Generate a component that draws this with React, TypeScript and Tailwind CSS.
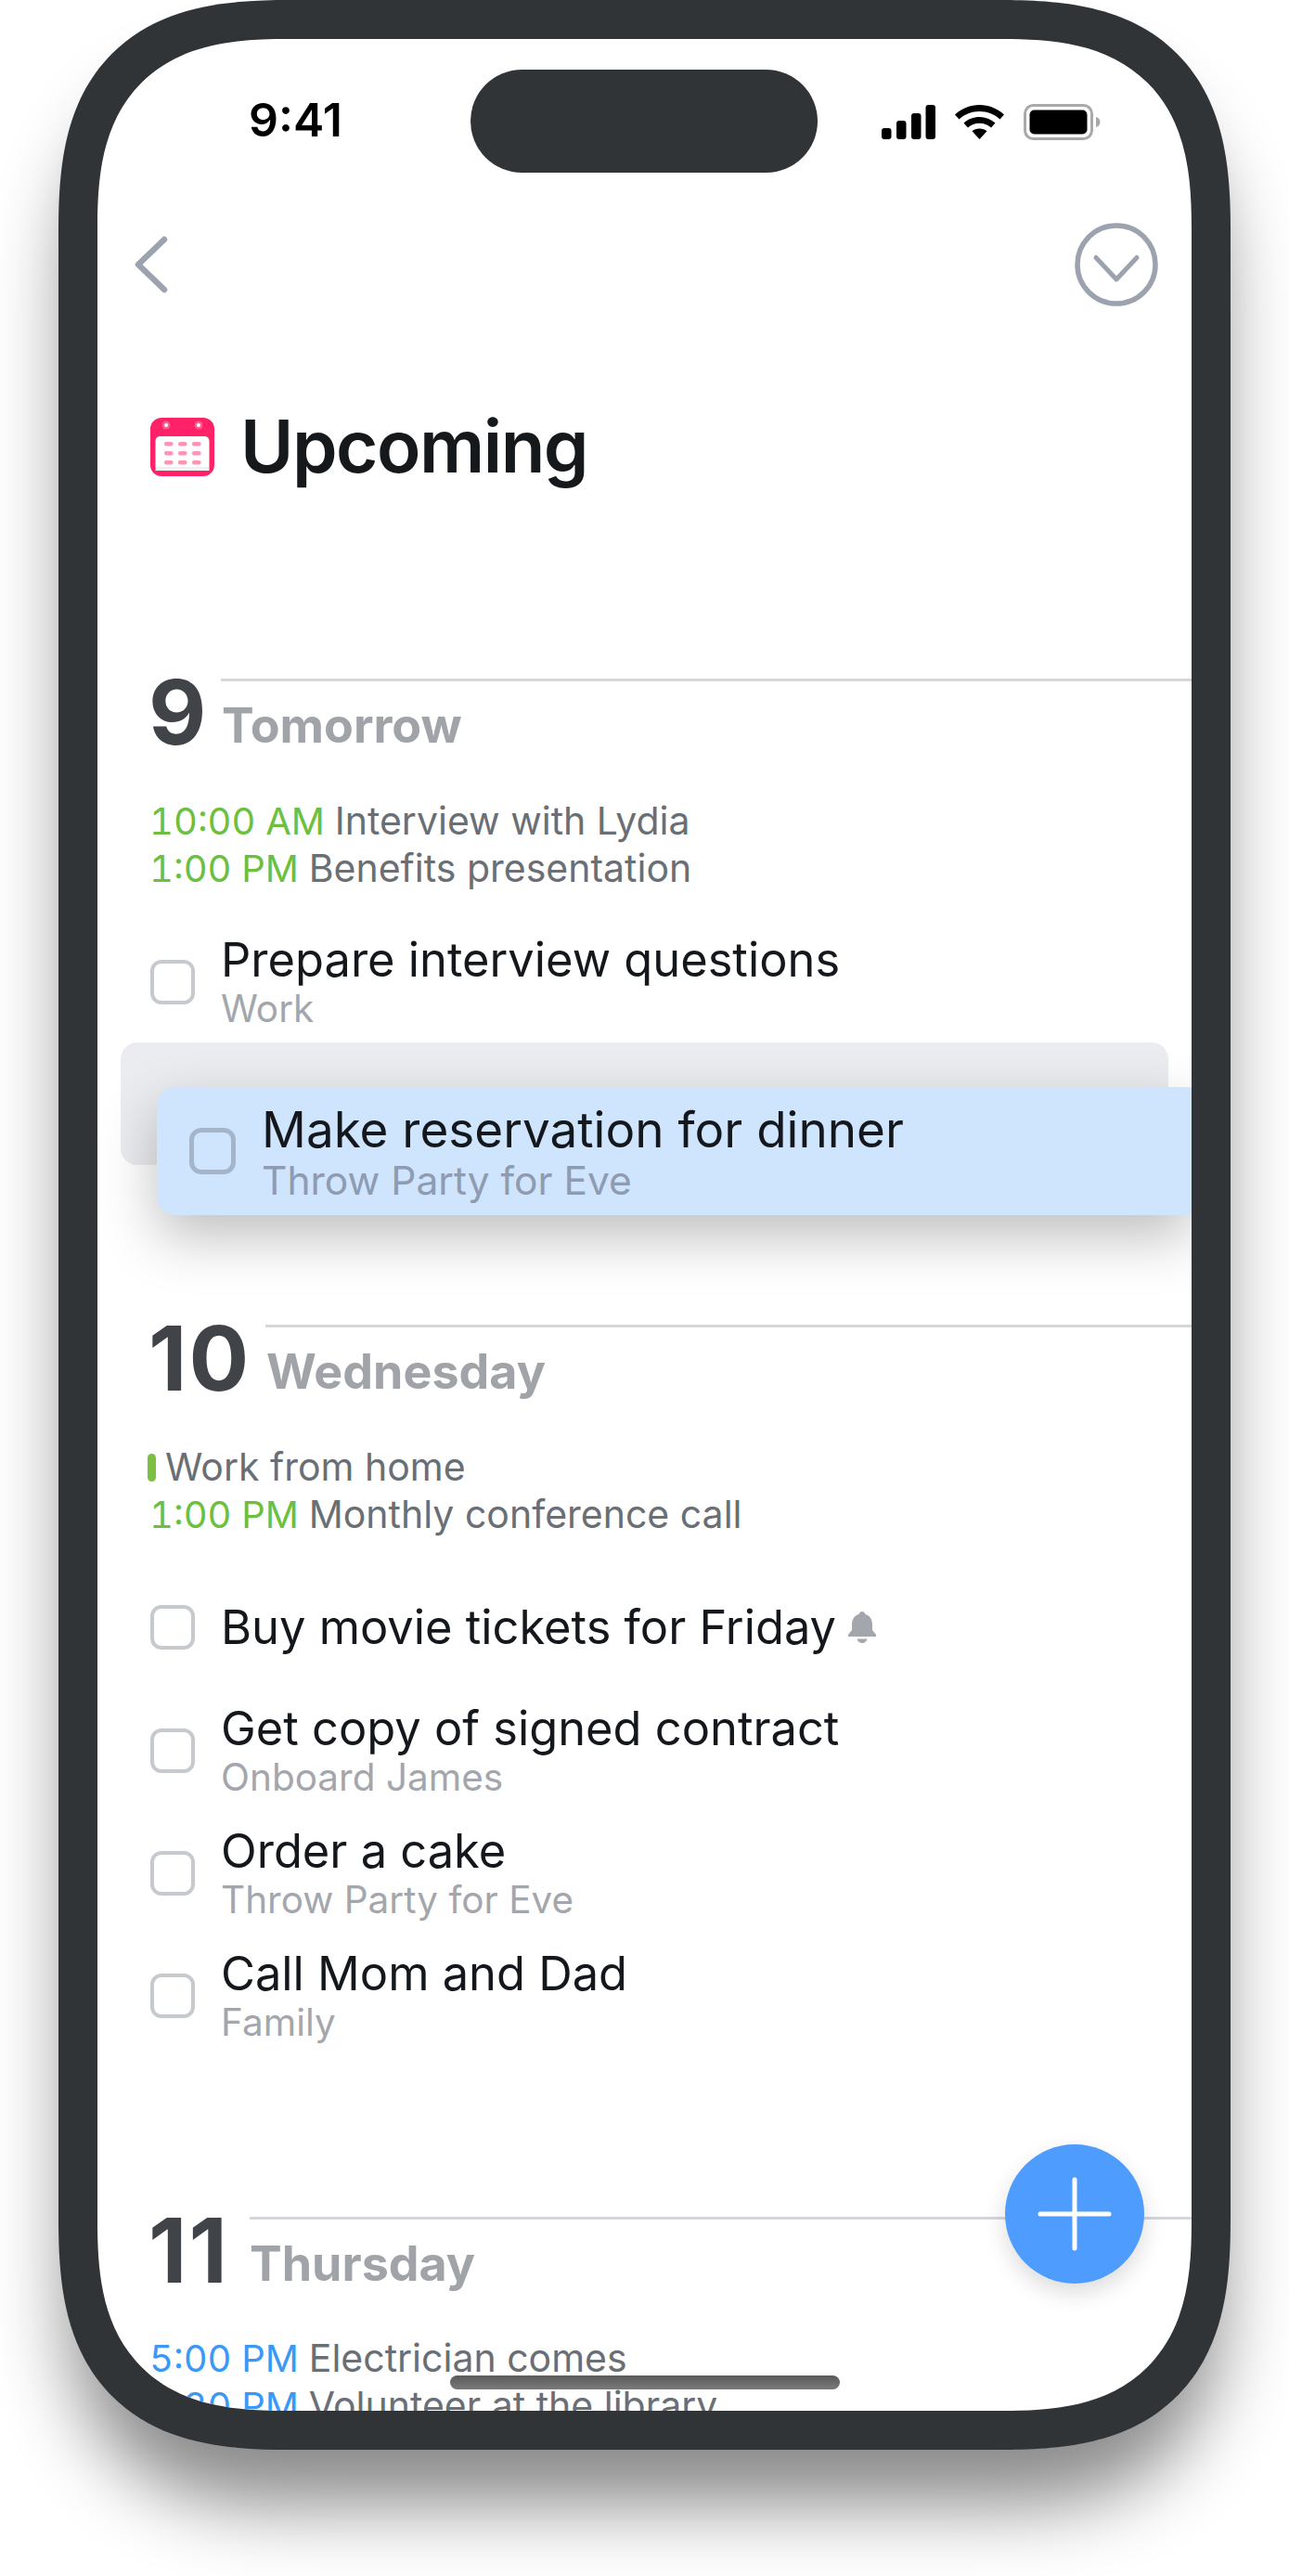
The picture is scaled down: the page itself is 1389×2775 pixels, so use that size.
const sans = "font-['Inter',sans-serif]";

function Check({ blue }: { blue?: boolean }) {
  return (
    <span
      className={
        blue
          ? "block h-[50px] w-[50px] shrink-0 rounded-[13px] border-[5px] border-[#a4b5ca]"
          : "block h-[48px] w-[48px] shrink-0 rounded-[12px] border-[4.5px] border-[#c6c9cd]"
      }
    />
  );
}

function Task({ title, sub }: { title: string; sub: string }) {
  return (
    <div className="flex h-[132px] items-center">
      <Check />
      <div className="ml-[28px]">
        <p className="h-[58px] text-[50.6px] leading-[58px] text-[#14181c]">{title}</p>
        <p className="h-[48px] text-[40.5px] leading-[48px] text-[#a3a7ad]">{sub}</p>
      </div>
    </div>
  );
}

function DayHeader({ day, name, dayWidth, lineLeft }: { day: string; name: string; dayWidth: string; lineLeft: string }) {
  return (
    <div className="relative flex h-[70px] items-baseline">
      <span className={`shrink-0 text-[96px] leading-[70px] font-bold tracking-[2px] text-[#404449] ${dayWidth}`}>
        <span className="-ml-[2px] inline-block">{day}</span>
      </span>
      <span className="-translate-y-[2px] text-[52px] leading-[64px] font-bold text-[#a0a3a8]">{name}</span>
      <span className={`absolute -top-[1px] right-0 h-[3px] bg-[#d4d6da] ${lineLeft}`} />
    </div>
  );
}

function Event({ time, text, blue }: { time?: string; text: string; blue?: boolean }) {
  return (
    <p className="-ml-[1px] h-[51px] text-[41px] leading-[51px] whitespace-nowrap text-[#6a6e75]">
      {time && <span className={`text-[40px] tabular-nums ${blue ? "text-[#3b99f5]" : "text-[#6cbf3f]"}`}>{time} </span>}
      {text}
    </p>
  );
}

function CalendarIcon() {
  return (
    <svg width="69" height="63" viewBox="0 0 69 63" className="shrink-0">
      <rect x="0" y="0" width="69" height="63" rx="12" fill="#ff2268" />
      <rect x="5.500" y="20" width="58" height="37" rx="5" fill="#fff" />
      <rect x="5.500" y="53" width="58" height="4" fill="#eef0f2" />
      <circle cx="17" cy="8" r="4.500" fill="#ff5c8e" />
      <circle cx="17" cy="8" r="2" fill="#fff" />
      <circle cx="52" cy="8" r="4.500" fill="#ff5c8e" />
      <circle cx="52" cy="8" r="2" fill="#fff" />
      {[26, 36, 46].map((y) =>
        [15, 30, 45].map((x) => (
          <rect key={`${x}-${y}`} x={x} y={y} width="9.500" height="4.500" rx="2" fill="#ff94b5" />
        ))
      )}
    </svg>
  );
}

export default function App() {
  return (
    <div className={`h-[2775px] w-[1389px] overflow-hidden bg-white pl-[63px] ${sans}`}>
      <div className="h-[2639px] w-[1263px] rounded-[250px] bg-[#313437] p-[42px] shadow-[0_70px_80px_-10px_rgba(0,0,0,0.46)] [corner-shape:superellipse(1.4)]">
        <div className="relative h-full overflow-hidden rounded-[205px] bg-white [corner-shape:superellipse(1.4)]">
          {/* status bar */}
          <div className="flex items-start pt-[62px] pl-[163px]">
            <span className="text-[50px] leading-[50px] font-semibold text-black">9:41</span>
          </div>
          <div className="absolute top-[33px] left-[402px] h-[111px] w-[374px] rounded-full bg-[#313437]" />
          <div className="absolute top-[70px] left-[845px] flex items-center">
            <svg width="58" height="37" viewBox="0 0 58 37" fill="#000">
              <rect x="0" y="25" width="10.500" height="12" rx="3" />
              <rect x="16" y="17" width="10.500" height="20" rx="3" />
              <rect x="32" y="9" width="10.500" height="28" rx="3" />
              <rect x="47.500" y="0" width="10.500" height="37" rx="3" />
            </svg>
            <svg width="53" height="37" viewBox="0 0 53 37" fill="#000" className="ml-[21px]">
              <path d="M26.500 0C16.500 0 7.500 3.600 0 10.500l4.500 5C10.500 10 18 7 26.500 7s16 3 22 8.500l4.500-5C45.500 3.600 36.500 0 26.500 0Z" />
              <path d="M26.500 13C20 13 14 15.300 9.500 19.500l4.500 5c3.400-3 7.600-4.700 12.500-4.700s9.100 1.700 12.500 4.700l4.500-5C38.500 15.300 33 13 26.500 13Z" />
              <path d="M26.500 25.500c-3.200 0-5.900 1-8 2.800L26.500 37l8-8.700c-2.100-1.800-4.800-2.800-8-2.800Z" />
            </svg>
            <svg width="83" height="39" viewBox="0 0 83 39" className="ml-[21px]">
              <rect x="1.500" y="1.500" width="72" height="36" rx="9" fill="none" stroke="#a9a9a9" strokeWidth="3" />
              <rect x="6.500" y="6.500" width="62" height="26" rx="5" fill="#000" />
              <path d="M78 14c3 .8 4.500 3 4.500 5.500S81 24.200 78 25Z" fill="#a9a9a9" />
            </svg>
          </div>

          {/* nav */}
          <div className="mt-[86px] flex h-[90px] items-center justify-between pr-[36px] pl-[40px]">
            <svg width="36" height="62" viewBox="0 0 36 62" fill="none" stroke="#9ca3af" strokeWidth="6.500" strokeLinecap="round" strokeLinejoin="round">
              <path d="M32 4 4 31l28 27" />
            </svg>
            <svg width="90" height="90" viewBox="0 0 90 90" fill="none" stroke="#9ca3af" strokeLinecap="round" strokeLinejoin="round">
              <circle cx="45" cy="45" r="42" strokeWidth="5.500" />
              <path d="M23 37.500 45 61l22-23.500" strokeWidth="5" />
            </svg>
          </div>

          {/* title */}
          <div className="mt-[119px] flex h-[64px] items-center pl-[57px]">
            <CalendarIcon />
            <h1 className="ml-[28px] text-[78px] leading-[64px] font-semibold tracking-[-1.5px] text-[#16191c]">Upcoming</h1>
          </div>

          <div className="pl-[57px]">
            {/* tomorrow */}
            <div className="mt-[219px]">
              <DayHeader day="9" name="Tomorrow" dayWidth="w-[77px]" lineLeft="left-[76px]" />
            </div>
            <div className="mt-[57px]">
              <Event time="10:00 AM" text="Interview with Lydia" />
              <Event time="1:00 PM" text="Benefits presentation" />
            </div>
            <div className="mt-[31px]">
              <Task title="Prepare interview questions" sub="Work" />
            </div>

            {/* wednesday */}
            <div className="mt-[304px]">
              <DayHeader day="10" name="Wednesday" dayWidth="w-[125px]" lineLeft="left-[124px]" />
            </div>
            <div className="mt-[57px]">
              <p className="flex h-[51px] items-center text-[41px] leading-[51px] text-[#6a6e75]">
                <span className="mr-[10px] -ml-[3px] h-[30px] w-[9px] rounded-full bg-[#7bc043]" />
                Work from home
              </p>
              <Event time="1:00 PM" text="Monthly conference call" />
            </div>
            <div className="mt-[42px] mb-[13px] flex h-[108px] items-center">
              <Check />
              <p className="ml-[28px] text-[50.6px] leading-[58px] text-[#14181c]">Buy movie tickets for Friday</p>
              <svg width="30" height="34" viewBox="0 0 30 34" fill="#a3a7ad" className="ml-[13px]">
                <path d="M15 0c1.800 0 3 1.200 3.200 2.800C23.500 4.300 26 8.800 26 14v6l4 5v2H0v-2l4-5v-6C4 8.800 6.500 4.300 11.800 2.800 12 1.200 13.200 0 15 0Z" />
                <path d="M9.500 29.500h11c-.6 2.700-2.800 4.500-5.500 4.500s-4.900-1.800-5.500-4.500Z" />
              </svg>
            </div>
            <Task title="Get copy of signed contract" sub="Onboard James" />
            <Task title="Order a cake" sub="Throw Party for Eve" />
            <Task title="Call Mom and Dad" sub="Family" />

            {/* thursday */}
            <div className="mt-[173px]">
              <DayHeader day="11" name="Thursday" dayWidth="w-[107px]" lineLeft="left-[107px]" />
            </div>
            <div className="mt-[56px]">
              <Event time="5:00 PM" text="Electrician comes" blue />
              <Event time="8:30 PM" text="Volunteer at the library" blue />
            </div>
          </div>

          {/* row being dragged */}
          <div className="absolute top-[1081px] right-[25px] left-[25px] h-[132px] rounded-[18px] bg-[#ebecef]" />
          <div className="absolute top-[1129px] right-0 left-[64px] flex h-[138px] items-center rounded-l-[20px] bg-[#cfe4fd] pl-[35px] shadow-[0_24px_60px_rgba(0,0,0,0.25)]">
            <Check blue />
            <div className="mt-[4px] ml-[28px]">
              <p className="h-[60px] text-[53px] leading-[60px] text-[#14181c]">Make reservation for dinner</p>
              <p className="h-[50px] text-[42.5px] leading-[50px] text-[#8e9bb0]">Throw Party for Eve</p>
            </div>
          </div>

          {/* add button */}
          <div className="absolute top-[2268px] left-[978px] flex h-[150px] w-[150px] items-center justify-center rounded-full bg-[#4f9cff] shadow-[0_10px_24px_rgba(0,0,0,0.14)]">
            <svg width="80" height="80" viewBox="0 0 80 80" stroke="#fff" strokeWidth="5" strokeLinecap="round">
              <path d="M40 3v74M3 40h74" />
            </svg>
          </div>

          {/* home indicator */}
          <div className="absolute top-[2517px] left-[380px] h-[15px] w-[420px] rounded-full bg-gradient-to-b from-[#5a5a5a] to-[#7a7a7a]" />
        </div>
      </div>
    </div>
  );
}
